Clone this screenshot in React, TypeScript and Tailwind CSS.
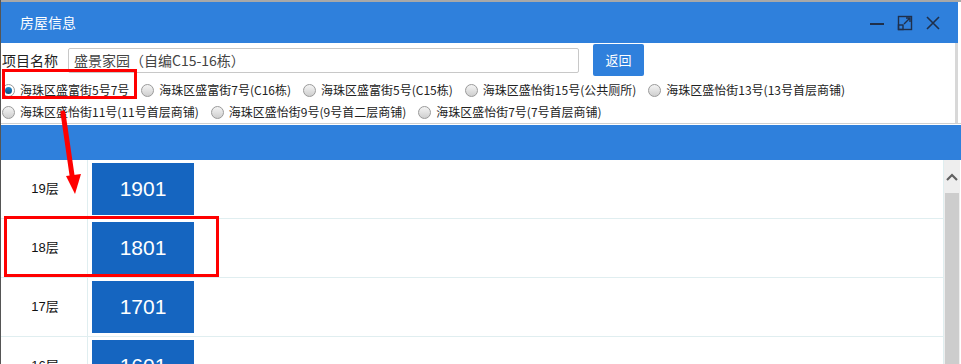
import React from "react";

const font = { fontFamily: '"Microsoft YaHei","Noto Sans CJK SC",Arial,sans-serif' };

function Radio({ checked, label }: { checked?: boolean; label: string }) {
  return (
    <div className="flex items-center">
      <span
        className={`w-[13px] h-[13px] rounded-full border border-[#9a9a9a] flex items-center justify-center ${
          checked ? "bg-white" : "bg-gradient-to-b from-[#f4f4f4] to-[#cfcfcf]"
        }`}
      >
        {checked && <span className="w-[7px] h-[7px] rounded-full bg-gradient-to-b from-[#1e88c8] to-[#0b4f80]" />}
      </span>
      <span className="ml-[5px] text-[12px] text-[#222] whitespace-nowrap">{label}</span>
    </div>
  );
}

const floors = [
  { f: "19层", u: "1901" },
  { f: "18层", u: "1801" },
  { f: "17层", u: "1701" },
  { f: "16层", u: "1601" },
];

export default function App() {
  return (
    <div className="w-[961px] h-[364px] bg-[#a8a8a8] overflow-hidden relative" style={font}>
      <div className="absolute left-0 top-0 w-[1px] h-[364px] bg-[#555]" />
      <div className="ml-[1px] mt-[2px] w-[960px] h-[362px] bg-white flex flex-col overflow-hidden">
        {/* title bar */}
        <div className="h-[41px] bg-[#2f80dc] flex items-center pl-[19px] pr-[17px] w-[957px]">
          <span className="text-white text-[14px]">房屋信息</span>
          <div className="ml-auto flex items-center gap-[12px] text-[#1f2f4a]">
            <svg width="16" height="16" viewBox="0 0 16 16">
              <path d="M1 9h14" stroke="#1f2f4a" strokeWidth="2" />
            </svg>
            <svg width="16" height="16" viewBox="0 0 16 16">
              <rect x="1.5" y="1.5" width="13" height="13" fill="none" stroke="#1f2f4a" strokeWidth="1.4" />
              <rect x="1.5" y="10" width="4.5" height="4.5" fill="none" stroke="#1f2f4a" strokeWidth="1.4" />
              <path d="M7 9L13 3M9 3h4v4" fill="none" stroke="#1f2f4a" strokeWidth="1.4" />
            </svg>
            <svg width="16" height="16" viewBox="0 0 16 16">
              <path d="M2 2l12 12M14 2L2 14" stroke="#1f2f4a" strokeWidth="1.6" />
            </svg>
          </div>
        </div>
        <div className="w-[957px] border-r-[3px] border-[#d8d8d8] flex flex-col">
          {/* name row */}
          <div className="flex items-center h-[34px] pl-[1px]">
            <span className="text-[14px] text-[#222] w-[66px]">项目名称</span>
            <div className="w-[511px] h-[25px] border border-[#c8c8c8] rounded-[2px] flex items-center pl-[5px] text-[14px] text-[#444]">
              盛景家园（自编C15-16栋）
            </div>
            <button className="ml-[14px] w-[51px] h-[32px] bg-[#2f80dc] rounded-[2px] text-white text-[13px]">返回</button>
          </div>
          {/* radio rows */}
          <div className="flex flex-col pl-[1px] pt-[2px]">
            <div className="flex items-center h-[22px] gap-[12px]">
              <Radio checked label="海珠区盛富街5号7号" />
              <Radio label="海珠区盛富街7号(C16栋)" />
              <Radio label="海珠区盛富街5号(C15栋)" />
              <Radio label="海珠区盛怡街15号(公共厕所)" />
              <Radio label="海珠区盛怡街13号(13号首层商铺)" />
            </div>
            <div className="flex items-center h-[22px] gap-[12px]">
              <Radio label="海珠区盛怡街11号(11号首层商铺)" />
              <Radio label="海珠区盛怡街9号(9号首二层商铺)" />
              <Radio label="海珠区盛怡街7号(7号首层商铺)" />
            </div>
          </div>
        </div>
        <div className="h-[1px] bg-[#d0d0d0]" />
        <div className="h-[35px] bg-[#2f80dc] mt-[1px]" />
        {/* table area */}
        <div className="flex flex-1 overflow-hidden">
          <div className="flex-1 flex flex-col">
            {floors.map((r) => (
              <div key={r.f} className="flex h-[59px] border-b border-[#e0eef0] shrink-0">
                <div
                  className="w-[87px] border-r border-[#e0eef0] flex items-center justify-center pl-[2px] text-[13px] text-[#111]"
                  style={{ fontFamily: 'Arial,"Noto Sans CJK SC",sans-serif' }}
                >
                  {r.f}
                </div>
                <div className="pl-[4px] pt-[3px]">
                  <div
                    className="w-[102px] h-[52px] bg-[#1565c0] text-white text-[21px] flex items-center justify-center"
                    style={{ fontFamily: '"Liberation Sans",Arial,sans-serif' }}
                  >
                    {r.u}
                  </div>
                </div>
              </div>
            ))}
          </div>
          <div className="w-[17px] mr-[1px] border-l border-[#dfeef0] bg-[#eeeeee] flex flex-col">
            <div className="h-[33px] flex items-center justify-center">
              <svg width="12" height="8" viewBox="0 0 12 8">
                <path d="M1 7l5-5 5 5" fill="none" stroke="#606060" strokeWidth="2.2" />
              </svg>
            </div>
            <div className="flex-1 bg-[#cdcdcd] mx-[1px]" />
          </div>
        </div>
      </div>
      {/* red annotations */}
      <div className="absolute left-[2px] top-[69px] w-[135px] h-[30px] border-[3px] border-[#ff0000]" />
      <div className="absolute left-[4px] top-[216px] w-[215px] h-[61px] border-[3px] border-[#ff0000]" />
      <svg className="absolute left-0 top-0" width="961" height="364" viewBox="0 0 961 364">
        <path d="M63 113L73 182" stroke="#ff0000" strokeWidth="5" strokeLinecap="round" />
        <path d="M66 176L81 174L75 194Z" fill="#ff0000" />
      </svg>
    </div>
  );
}
